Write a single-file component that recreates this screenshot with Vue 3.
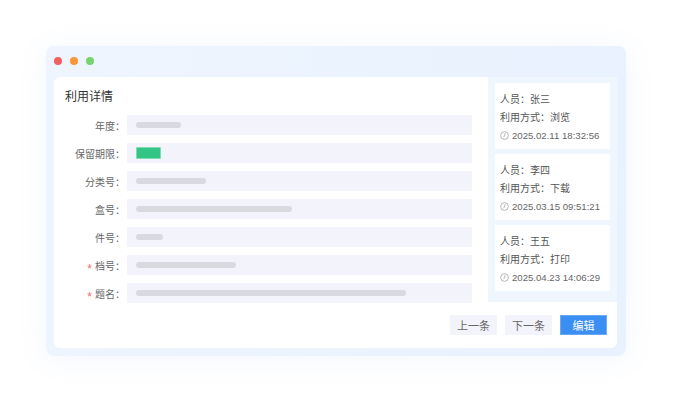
<script setup>
const rows = [
  { label: '年度', w: 45 },
  { label: '保留期限', tag: true },
  { label: '分类号', w: 70 },
  { label: '盒号', w: 156 },
  { label: '件号', w: 27 },
  { label: '档号', w: 100, req: true },
  { label: '题名', w: 270, req: true },
]
const logs = [
  { user: '张三', way: '浏览', time: '2025.02.11 18:32:56' },
  { user: '李四', way: '下载', time: '2025.03.15 09:51:21' },
  { user: '王五', way: '打印', time: '2025.04.23 14:06:29' },
]
</script>

<template>
  <div class="page">
    <div class="window">
      <div class="titlebar">
        <i class="dot red"></i><i class="dot orange"></i><i class="dot green"></i>
      </div>
      <div class="body">
        <div class="top">
          <div class="detail">
            <div class="title">利用详情</div>
            <div class="rows">
              <div v-for="r in rows" :key="r.label" class="row">
                <div class="label"><span v-if="r.req" class="req">*</span>{{ r.label }}：</div>
                <div class="field">
                  <span v-if="r.tag" class="tag"></span>
                  <span v-else class="bar" :style="{ width: r.w + 'px' }"></span>
                </div>
              </div>
            </div>
          </div>
          <div class="side">
            <div v-for="l in logs" :key="l.user" class="card">
              <div class="line">人员：{{ l.user }}</div>
              <div class="line">利用方式：{{ l.way }}</div>
              <div class="time">
                <svg class="clock" viewBox="0 0 10 10" width="9" height="9">
                  <circle cx="5" cy="5" r="4.3" fill="none" stroke="#9a9a9a" stroke-width="0.8" />
                  <path d="M5.6 2.4 L5 5.4 L3.8 7" fill="none" stroke="#9a9a9a" stroke-width="0.8" />
                </svg>
                {{ l.time }}
              </div>
            </div>
          </div>
        </div>
        <div class="actions">
          <button class="btn">上一条</button>
          <button class="btn">下一条</button>
          <button class="btn primary">编辑</button>
        </div>
      </div>
    </div>
  </div>
</template>

<style>
html, body { margin: 0; background: #fff; }
</style>

<style scoped>
.page {
  width: 678px;
  height: 408px;
  box-sizing: border-box;
  padding: 46px 52px 52px 46px;
  background: #fff;
  font-family: "Noto Sans CJK SC", "Liberation Sans", sans-serif;
  overflow: hidden;
}
.window {
  width: 580px;
  height: 310px;
  box-sizing: border-box;
  padding: 0 9px 8px 8px;
  background: linear-gradient(100deg, #eef5fe, #e8f1fe);
  border-radius: 8px;
  box-shadow: 0 3px 30px rgba(90, 140, 230, 0.08);
  display: flex;
  flex-direction: column;
}
.titlebar {
  height: 31px;
  flex: none;
  display: flex;
  align-items: center;
  gap: 8px;
  padding-bottom: 1px;
  box-sizing: border-box;
}
.dot { width: 8px; height: 8px; border-radius: 50%; display: block; }
.red { background: #f25f5f; }
.orange { background: #fb9638; }
.green { background: #74d56d; }
.body {
  flex: 1;
  background: #fff;
  border-radius: 6px 0 6px 6px;
  display: flex;
  flex-direction: column;
  overflow: hidden;
}
.top { display: flex; height: 225px; flex: none; }
.detail { flex: 1; padding: 0 16px 0 11px; min-width: 0; }
.title {
  height: 38px;
  line-height: 38px;
  font-size: 12px;
  color: #333;
}
.rows { display: flex; flex-direction: column; gap: 8px; }
.row { display: flex; height: 20px; align-items: center; }
.label {
  width: 60px;
  height: 20px;
  margin-right: 2px;
  padding-top: 1px;
  box-sizing: border-box;
  flex: none;
  text-align: right;
  font-size: 10px;
  line-height: 20px;
  color: #666;
  white-space: nowrap;
}
.req {
  color: #f56c6c;
  margin-right: 3px;
  font-family: "Liberation Sans", sans-serif;
  font-size: 12px;
  line-height: 1;
  vertical-align: -3px;
}
.field {
  flex: 1;
  height: 20px;
  background: #f3f4fb;
  display: flex;
  align-items: center;
  padding-left: 9px;
  padding-bottom: 1px;
  box-sizing: border-box;
}
.bar { height: 6px; border-radius: 3px; background: #d9dae0; display: block; }
.tag {
  width: 25px;
  height: 12px;
  box-sizing: border-box;
  background: #32c585;
  border: 1px solid #7fdcb2;
  border-radius: 1px;
  display: block;
  margin-top: 1px;
}
.side {
  width: 129px;
  flex: none;
  box-sizing: border-box;
  background: #f0f6fe;
  padding: 6px 7px 0 7px;
  display: flex;
  flex-direction: column;
  gap: 5px;
}
.card {
  height: 66px;
  background: #fff;
  box-sizing: border-box;
  padding: 7px 5px;
  font-size: 10px;
  color: #555;
}
.line { height: 18px; line-height: 18px; white-space: nowrap; }
.time {
  height: 18px;
  display: flex;
  align-items: center;
  gap: 3px;
  font-size: 9.6px;
  color: #666;
  font-family: "Liberation Sans", sans-serif;
  white-space: nowrap;
}
.clock { flex: none; }
.actions {
  flex: 1;
  display: flex;
  justify-content: flex-end;
  align-items: flex-start;
  gap: 8px;
  padding: 13px 10px 0 0;
}
.btn {
  width: 47px;
  height: 20px;
  padding: 0;
  border: 0;
  background: #f3f4fb;
  color: #666;
  font-size: 11px;
  line-height: 20px;
  font-family: inherit;
}
.primary { background: #3b8ff3; color: #fff; border: 1px solid #6aa9f6; line-height: 18px; }
</style>
